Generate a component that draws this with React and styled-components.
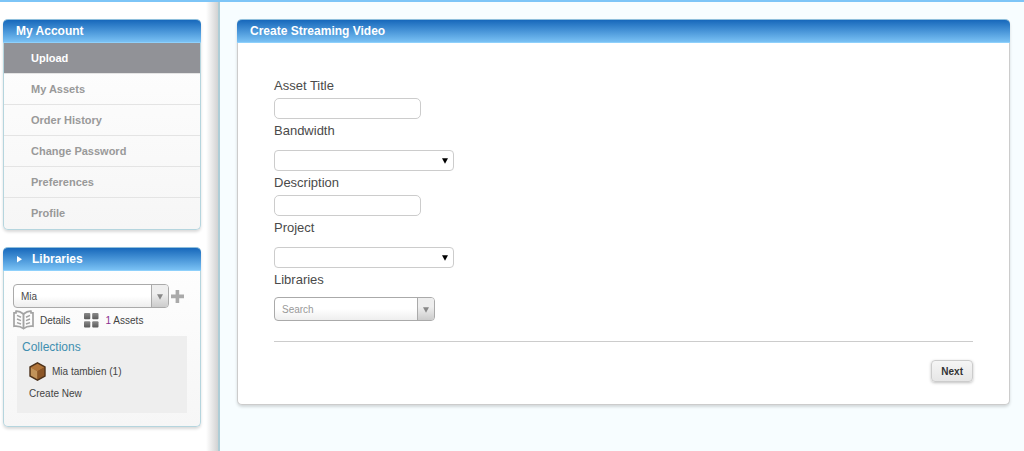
import React from 'react';
import styled, { createGlobalStyle } from 'styled-components';

const GlobalStyle = createGlobalStyle`
  * {
    box-sizing: border-box;
  }

  body {
    margin: 0;
    background: #f7fdff;
    color: #4a4a4a;
    font-family: "Liberation Sans", Arial, sans-serif;
    font-size: 10px;
  }

  input, select, button {
    margin: 0;
    color: inherit;
    font-family: inherit;
  }
`;

const Page = styled.div`
  display: flex;
  min-height: 100vh;
  border-top: 2px solid #7dc5f7;
`;

const Sidebar = styled.aside`
  display: flex;
  flex-direction: column;
  flex: none;
  gap: 17px;
  width: 220px;
  padding: 17px 17px 17px 3px;
  border-right: 2px solid #aecdd6;
  background: linear-gradient(to left, #d2d2d2, #fff 12px);
`;

const Main = styled.main`
  flex: 1;
  padding: 17px 14px 17px 17px;
`;

const Panel = styled.section`
  border: 1px solid ${props => props.$border};
  border-top: 0;
  border-radius: 5px;
  background: ${props => props.$background};
  box-shadow: 0 2px 3px rgba(0, 0, 0, 0.15);
`;

const PanelHeader = styled.h2`
  display: flex;
  align-items: center;
  gap: 9px;
  height: 24px;
  margin: 0 -1px;
  padding: 0 13px;
  border-top: 1px solid #8fbfdc;
  border-bottom: 1px solid #8ed0fb;
  border-radius: 5px 5px 0 0;
  background: linear-gradient(#1768bb, #79c1f4);
  color: #fff;
  font-size: 12px;
  line-height: 22px;
`;

const Menu = styled.ul`
  margin: 0;
  padding: 0;
  list-style: none;
`;

const MenuLink = styled.a`
  display: block;
  height: 31px;
  padding-left: 27px;
  border-bottom: 1px solid #e4e4e4;
  background: ${props => (props.$active ? '#919297' : 'transparent')};
  color: ${props => (props.$active ? '#fff' : '#999')};
  font-size: 11px;
  font-weight: bold;
  line-height: 30px;
  text-decoration: none;

  li:last-child > & {
    border-bottom: 0;
  }
`;

const LibraryBody = styled.div`
  padding: 13px 13px 13px 9px;
`;

const Row = styled.div`
  display: flex;
  align-items: center;
  gap: ${props => props.$gap}px;

  & + & {
    margin-top: 2px;
  }
`;

const Combo = styled.div`
  display: grid;
  grid-template-columns: 1fr 17px;
  width: ${props => props.$width}px;
  height: 24px;
  overflow: hidden;
  border: 1px solid #aaa;
  border-radius: 4px;
  background: linear-gradient(#fff 50%, #eee);
`;

const comboField = `
  grid-area: 1 / 1 / 2 / 2;
  width: 100%;
  min-width: 0;
  padding: 0 7px;
  border: 0;
  outline: 0;
  appearance: none;
  background: transparent;
  font-size: 10px;
`;

const ComboSelect = styled.select`
  ${comboField}
`;

const ComboInput = styled.input`
  ${comboField}

  &::placeholder {
    color: #999;
    opacity: 1;
  }
`;

const ComboButton = styled.button`
  display: flex;
  align-items: center;
  justify-content: center;
  padding: 2px 0 0;
  border: 0;
  border-left: 1px solid #aaa;
  background: linear-gradient(#eee 40%, #ccc);
`;

const IconButton = styled.button`
  display: flex;
  padding: 0;
  border: 0;
  background: none;
`;

const IconLink = styled.a`
  display: flex;
  align-items: center;
  gap: ${props => props.$gap || 0}px;
  color: #444;
  text-decoration: none;
`;

const Count = styled.span`
  color: #8a2f8f;
`;

const Collections = styled.div`
  margin: 6px 0 0 4px;
  padding: 4px 5px 12px;
  background: #eee;
`;

const CollectionsTitle = styled.h3`
  margin: 0 0 7px;
  color: #3f8fb0;
  font-size: 12px;
  font-weight: normal;
  line-height: 15px;
`;

const CollectionList = styled.ul`
  display: flex;
  flex-direction: column;
  gap: 6px;
  margin: 0;
  padding: 0 0 0 7px;
  line-height: 14px;
  list-style: none;
`;

const Form = styled.form`
  padding: 34px 36px 22px;
`;

const Field = styled.div`
  display: flex;
  flex-direction: column;
  align-items: flex-start;
  gap: ${props => props.$gap || 3}px;
  margin-bottom: 3px;
`;

const Label = styled.label`
  font-size: 13px;
  line-height: 18px;
`;

const TextInput = styled.input`
  width: 147px;
  height: 21px;
  padding: 0 6px;
  border: 1px solid #ccc;
  border-radius: 5px;
  background: #fff;
  font-size: 12px;
`;

const SelectBox = styled.div`
  display: grid;
  align-items: center;
  width: 180px;
  height: 21px;

  > * {
    grid-area: 1 / 1;
  }

  > svg {
    justify-self: end;
    margin-right: 6px;
    pointer-events: none;
  }
`;

const Select = styled.select`
  width: 100%;
  height: 100%;
  padding: 0 20px 0 6px;
  border: 1px solid #ccc;
  border-radius: 4px;
  appearance: none;
  background: #fff;
  font-size: 12px;
`;

const Actions = styled.div`
  display: flex;
  justify-content: flex-end;
  margin-top: 20px;
  padding-top: 18px;
  border-top: 1px solid #ccc;
`;

const NextButton = styled.button`
  height: 22px;
  padding: 0 9px;
  border: 1px solid #ccc;
  border-radius: 4px;
  background: linear-gradient(#f5f5f5, #e6e6e6);
  box-shadow: 0 1px 3px rgba(0, 0, 0, 0.25);
  color: #333;
  font-size: 10px;
  font-weight: bold;
`;

const DownArrow = ({ color = '#888', size = 6 }) => (
  <svg width={size} height={size} viewBox="0 0 6 6" aria-hidden="true">
    <path d="M0 0.3H6L3 5.8Z" fill={color} />
  </svg>
);

const RightArrow = () => (
  <svg width="7" height="8" viewBox="0 0 7 8" aria-hidden="true">
    <path d="M1 1L6 4.2L1 7.5Z" fill="#fff" />
  </svg>
);

const PlusIcon = () => (
  <svg width="13" height="13" viewBox="0 0 13 13" aria-hidden="true">
    <path d="M4.6 0H8.2V4.6H13V8.2H8.2V13H4.6V8.2H0V4.6H4.6Z" fill="#aaa" />
  </svg>
);

const BookIcon = () => (
  <svg width="21" height="20" viewBox="0 0 21 20" fill="none" stroke="#a3a3a3" aria-hidden="true">
    <path d="M10.5 4C8 2 5 1 3 1.2V2.8H1V16.2C4.5 15.8 8 16.5 10.5 18.6C13 16.5 16.5 15.8 20 16.2V2.8H18V1.2C16 1 13 2 10.5 4Z" strokeWidth="1.7" />
    <path d="M10.5 4V18" strokeWidth="1.9" />
    <path d="M4 5.4L8 7.2M4 9L8 10.6M4 12.6L8 14M17 5.4L13 7.2M17 9L13 10.6M17 12.6L13 14" strokeWidth="1.5" />
  </svg>
);

const GridIcon = () => (
  <svg width="15" height="15" viewBox="0 0 15 15" aria-hidden="true">
    <defs>
      <linearGradient id="tile" x1="0" y1="0" x2="0" y2="1">
        <stop offset="0" stopColor="#8a8a8a" />
        <stop offset="1" stopColor="#5a5a5a" />
      </linearGradient>
    </defs>
    <g fill="url(#tile)">
      <rect width="6.3" height="6.3" rx="1" />
      <rect x="8.2" width="6.3" height="6.3" rx="1" />
      <rect y="8.2" width="6.3" height="6.3" rx="1" />
      <rect x="8.2" y="8.2" width="6.3" height="6.3" rx="1" />
    </g>
  </svg>
);

const BoxIcon = () => (
  <svg width="17" height="19" viewBox="0 0 17 19" aria-hidden="true">
    <path d="M8.5 0.8L16 5V14L8.5 18.2L1 14V5Z" fill="#7a4a20" stroke="#4d321b" strokeWidth="1.4" />
    <path d="M8.5 1.7L15.2 5.5L8.5 9.2L1.8 5.5Z" fill="#b0743a" />
    <path d="M1.8 5.5L8.5 9.2V17.2L1.8 13.5Z" fill="#c2935a" />
    <path d="M15.2 5.5L8.5 9.2V17.2L15.2 13.5Z" fill="#8c5627" />
  </svg>
);

const menuItems = ['Upload', 'My Assets', 'Order History', 'Change Password', 'Preferences', 'Profile'];

const AccountPanel = () => (
  <Panel $border="#b5d5de" $background="linear-gradient(#fff, #f6f6f6)">
    <PanelHeader>My Account</PanelHeader>
    <nav>
      <Menu>
        {menuItems.map(item => (
          <li key={item}>
            <MenuLink href="#" $active={item === 'Upload'}>{item}</MenuLink>
          </li>
        ))}
      </Menu>
    </nav>
  </Panel>
);

const LibrariesPanel = () => (
  <Panel $border="#b5d5de" $background="linear-gradient(#fff, #f6f6f6)">
    <PanelHeader><RightArrow />Libraries</PanelHeader>
    <LibraryBody>
      <Row $gap={2}>
        <Combo $width={156}>
          <ComboSelect id="library" aria-label="Library">
            <option>Mia</option>
          </ComboSelect>
          <ComboButton type="button" aria-label="Show libraries"><DownArrow /></ComboButton>
        </Combo>
        <IconButton type="button" aria-label="Add library"><PlusIcon /></IconButton>
      </Row>
      <Row $gap={13}>
        <IconLink href="#" $gap={6}><BookIcon />Details</IconLink>
        <IconLink href="#" $gap={7}><GridIcon /><span><Count>1</Count> Assets</span></IconLink>
      </Row>
      <Collections>
        <CollectionsTitle>Collections</CollectionsTitle>
        <CollectionList>
          <li><IconLink href="#" $gap={6}><BoxIcon />Mia tambien (1)</IconLink></li>
          <li><IconLink href="#">Create New</IconLink></li>
        </CollectionList>
      </Collections>
    </LibraryBody>
  </Panel>
);

const TextField = ({ id, label }) => (
  <Field>
    <Label htmlFor={id}>{label}</Label>
    <TextInput id={id} type="text" />
  </Field>
);

const SelectField = ({ id, label }) => (
  <Field $gap={10}>
    <Label htmlFor={id}>{label}</Label>
    <SelectBox>
      <Select id={id}>
        <option value="" />
      </Select>
      <DownArrow color="#000" />
    </SelectBox>
  </Field>
);

class App extends React.PureComponent {
  render() {
    return (
      <Page>
        <GlobalStyle />
        <Sidebar>
          <AccountPanel />
          <LibrariesPanel />
        </Sidebar>
        <Main>
          <Panel $border="#ccc" $background="#fff">
            <PanelHeader>Create Streaming Video</PanelHeader>
            <Form onSubmit={e => e.preventDefault()}>
              <TextField id="title" label="Asset Title" />
              <SelectField id="bandwidth" label="Bandwidth" />
              <TextField id="description" label="Description" />
              <SelectField id="project" label="Project" />
              <Field $gap={8}>
                <Label htmlFor="libraries">Libraries</Label>
                <Combo $width={161}>
                  <ComboInput id="libraries" type="text" placeholder="Search" />
                  <ComboButton type="button" aria-label="Show options"><DownArrow /></ComboButton>
                </Combo>
              </Field>
              <Actions>
                <NextButton type="submit">Next</NextButton>
              </Actions>
            </Form>
          </Panel>
        </Main>
      </Page>
    );
  }
}

export default App;
